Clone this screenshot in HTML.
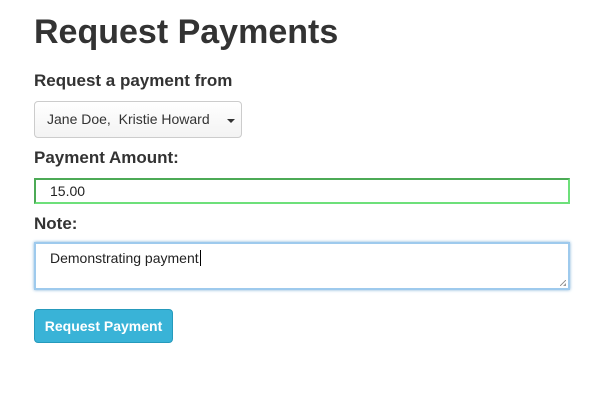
<!DOCTYPE html>
<html><head><style>
body{margin:0;background:#fff;font-family:"Liberation Sans",sans-serif;color:#333;width:615px;height:414px;position:relative;overflow:hidden}
.a{position:absolute}
h1{position:absolute;left:34px;top:12px;margin:0;font-size:34px;font-weight:bold;color:#333;line-height:40px}
.l{position:absolute;left:34px;font-size:17px;font-weight:bold;color:#333}
</style></head><body>
<h1>Request Payments</h1>
<div class="l" style="top:71px">Request a payment from</div>
<div class="a" style="left:34px;top:101px;width:208px;height:37px;border:1px solid #ccc;border-radius:4px;background:linear-gradient(#fff,#f3f3f3);box-sizing:border-box;font-size:14px;line-height:35px;padding-left:12px;color:#333">Jane Doe,&nbsp; Kristie Howard
<span class="a" style="left:192px;top:17px;width:0;height:0;border-left:4px solid transparent;border-right:4px solid transparent;border-top:4px solid #333"></span></div>
<div class="l" style="top:148px">Payment Amount:</div>
<div class="a" style="left:34px;top:178px;width:536px;height:26px;box-sizing:border-box;border:2px solid #6de07a;border-top-color:#4caa56;border-left-color:#4caa56;font-size:14px;line-height:22px;padding-left:14px;color:#222">15.00</div>
<div class="l" style="top:214px">Note:</div>
<div class="a" style="left:34px;top:242px;width:536px;height:48px;box-sizing:border-box;border:2px solid #9ecaed;box-shadow:0 0 3px #7fb0d8;font-size:14px;line-height:22px;padding-left:14px;padding-top:3px;color:#222">Demonstrating payment<span style="border-left:1px solid #000;margin-left:1px"></span>
<span class="a" style="right:2px;bottom:2px;width:6px;height:6px;background:linear-gradient(135deg,transparent 45%,#999 45%,#999 55%,transparent 55%,transparent 75%,#999 75%)"></span></div>
<div class="a" style="left:34px;top:309px;width:139px;height:34px;box-sizing:border-box;background:#39b3d7;border:1px solid #269abc;border-radius:4px;color:#fff;font-size:14px;font-weight:bold;line-height:32px;text-align:center">Request Payment</div>
</body></html>
